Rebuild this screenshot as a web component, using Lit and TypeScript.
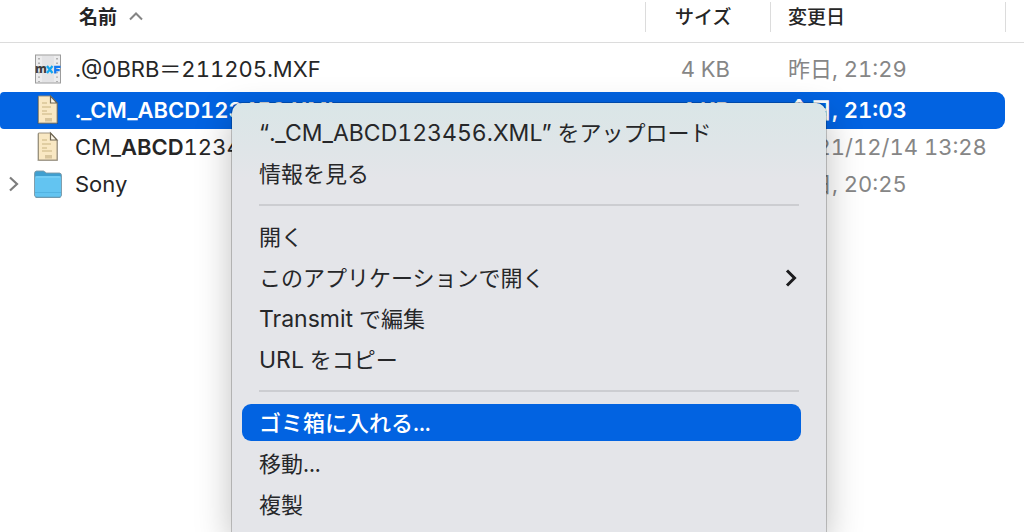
import { LitElement, html, css, svg, nothing, TemplateResult } from "lit";
import { customElement, property, state } from "lit/decorators.js";
import { classMap } from "lit/directives/class-map.js";

type Kind = "mxf" | "doc" | "folder";

interface Entry {
  kind: Kind;
  name: TemplateResult;
  size: string;
  date: string;
}

interface Item {
  id: string;
  label: TemplateResult;
  submenu?: boolean;
}

const entries: Entry[] = [
  { kind: "mxf", name: html`.@0BRB＝211205.MXF`, size: "4 KB", date: "昨日, 21:29" },
  { kind: "doc", name: html`._CM_ABCD123456.XML`, size: "4 KB", date: "今日, 21:03" },
  { kind: "doc", name: html`CM_<b>ABCD</b>123456.XML`, size: "4 KB", date: "2021/12/14 13:28" },
  { kind: "folder", name: html`Sony`, size: "--", date: "今日, 20:25" },
];

const menuGroups: Item[][] = [
  [
    { id: "upload", label: html`<span class="latin">“._CM_ABCD123456.XML”</span> をアップロード` },
    { id: "info", label: html`情報を見る` },
  ],
  [
    { id: "open", label: html`開く` },
    { id: "open-with", label: html`このアプリケーションで開く`, submenu: true },
    { id: "edit", label: html`<span class="latin">Transmit</span> で編集` },
    { id: "copy-url", label: html`<span class="latin">URL</span> をコピー` },
  ],
  [
    { id: "trash", label: html`ゴミ箱に入れる...` },
    { id: "move", label: html`移動...` },
    { id: "duplicate", label: html`複製` },
  ],
];

@customElement("file-icon")
class FileIcon extends LitElement {
  @property() kind: Kind = "doc";

  static styles = css`
    :host { display: flex; }
    .badge { font: 800 12px "Noto Sans", sans-serif; }
  `;

  private mxf() {
    return svg`
      <rect x="2.5" y="2" width="25" height="28" fill="#ececed" stroke="#9c9c9c"/>
      <path d="M6 5v24M24 5v24" stroke="#999" stroke-width="1.4" stroke-dasharray="1.4 3.2"/>
      <rect x="9" y="3" width="12" height="26" fill="#e3e3e5"/>
      <text class="badge" x="2" y="20" fill="#3c3c3c">m</text>
      <path d="M14 13l5.500 7M19.500 13l-5.500 7" stroke="#12a6ee" stroke-width="2.200"/>
      <path d="M22.200 20.500v-6.600h5.300M22.200 17.200h4.500" stroke="#1279f2" stroke-width="2.200"/>`;
  }

  private doc() {
    return svg`
      <path d="M4.500 2.500h13.500l7 7.500v20h-20.500z" fill="#4f4630" opacity=".45"/>
      <path d="M5.500 2h12l6.500 7v20h-18.500z" fill="#f9e8c3" stroke="#948b76" stroke-width=".9"/>
      <path d="M17.500 2v7H24z" fill="#fff8e8" stroke="#6e6552" stroke-width="1.200"/>
      <path d="M9 9h5M9 13h9M9 17h5M9 20h10" stroke="#d9c598" stroke-width="1.300"/>
      <path d="M12 24h7v3.500h-7z" fill="#d8c59c"/>`;
  }

  private folder() {
    return svg`
      <path d="M1.500 6q0-3 2-3h7l3 2h13q2 0 2 3v19q0 2-2 2h-23q-2 0-2-2z" fill="#3f9fd0" stroke="#7e98a5" stroke-width=".9"/>
      <path d="M2 10q0-2 2-2h22q2 0 2 2v17q0 2-2 2h-22q-2 0-2-2z" fill="#63c4f1"/>
      <path d="M2.500 9h25" stroke="#84d5f8"/>
      <path d="M2 24.500h26" stroke="#52b3e2"/>
      <path d="M2.500 29.300h25" stroke="#5a8ba5"/>`;
  }

  render() {
    const art = this.kind === "mxf" ? this.mxf() : this.kind === "doc" ? this.doc() : this.folder();
    return html`<svg width="30" height="32" viewBox="0 0 30 32" fill="none" aria-hidden="true">${art}</svg>`;
  }
}

@customElement("context-menu")
class ContextMenu extends LitElement {
  @state() private active = "trash";

  static styles = css`
    :host {
      display: block;
      box-sizing: border-box;
      padding: 11px 25px 0 10px;
      border-radius: 10px 10px 0 0;
      background: linear-gradient(#dae6e7, #dfe5e8 44px, #e4e5e9 76px);
      box-shadow: 0 0 0 1px rgba(0, 0, 0, 0.2), 0 12px 36px rgba(0, 0, 0, 0.26);
    }
    .group {
      display: flex;
      flex-direction: column;
      gap: 4px;
    }
    .rule {
      height: 2px;
      margin: 12px 2px 12px 17px;
      border: 0;
      background: #cccdd1;
    }
    .item {
      display: flex;
      align-items: center;
      justify-content: space-between;
      height: 37px;
      padding: 0 2px 0 17px;
      border: 0;
      border-radius: 9px;
      background: none;
      color: #262729;
      font: inherit;
      font-variant-numeric: tabular-nums;
      text-align: left;
      white-space: nowrap;
    }
    .latin { font-size: 23px; }
    .active {
      background: #0263e1;
      color: #fff;
      font-weight: 500;
    }
  `;

  render() {
    return html`${menuGroups.map(
      (group, i) => html`
        ${i ? html`<hr class="rule" />` : nothing}
        <div class="group" role="group">
          ${group.map(
            (item) => html`<button
              class=${classMap({ item: true, active: item.id === this.active })}
              role="menuitem"
              @mouseenter=${() => (this.active = item.id)}
            >
              <span>${item.label}</span>
              ${item.submenu
                ? html`<svg width="16" height="20" viewBox="0 0 16 20" fill="none" aria-hidden="true">
                    <path d="M4 2.500l7.500 7.500-7.500 7.500" stroke="#1c1c1e" stroke-width="3" />
                  </svg>`
                : nothing}
            </button>`
          )}
        </div>
      `
    )}`;
  }
}

@customElement("app-root")
class AppRoot extends LitElement {
  @state() private selected = 1;

  static styles = css`
    :host {
      display: block;
      position: relative;
      height: 100vh;
      overflow: hidden;
      background: #fff;
      color: #262626;
      font: 22px/30px Inter, "Noto Sans CJK JP", sans-serif;
      font-variant-numeric: tabular-nums;
    }
    .list {
      width: 100%;
      table-layout: fixed;
      border-collapse: separate;
      border-spacing: 0;
    }
    .col-size { width: 125px; }
    .col-date { width: 235px; }
    .col-end { width: 19px; }
    th {
      height: 42px;
      padding: 0;
      border-bottom: 1px solid #dcdcdc;
      font-size: 19px;
      font-weight: 500;
      text-align: left;
    }
    .label {
      display: flex;
      align-items: center;
      box-sizing: border-box;
      height: 30px;
      margin-bottom: 8px;
      padding: 2px 0 0 17px;
      border-left: 1px solid #dcdcdc;
    }
    .sorted {
      gap: 12px;
      padding-left: 79px;
      border-left: 0;
      font-weight: 700;
    }
    .size-label { padding-left: 29px; }
    td {
      height: 35px;
      padding: 0 0 2px;
      color: #868686;
      white-space: nowrap;
    }
    .first td {
      height: 46px;
      padding-top: 3px;
      padding-bottom: 0;
    }
    .name {
      display: flex;
      align-items: center;
      padding-left: 7px;
      color: #262626;
    }
    .name b { font-weight: 600; }
    .toggle {
      display: flex;
      width: 26px;
      padding: 0;
      border: 0;
      background: none;
    }
    .text { padding-left: 12px; }
    td.size {
      padding-right: 40px;
      text-align: right;
    }
    td.date { padding-left: 18px; }
    .selected td {
      background: #0263e1;
      color: #fff;
      font-weight: 600;
    }
    .selected .name { color: #fff; }
    .selected td:first-child { border-radius: 4px 0 0 4px; }
    .selected .date { border-radius: 0 9px 9px 0; }
    .selected .tail { background: none; }
    .menu {
      position: absolute;
      top: 103px;
      bottom: 0;
      left: 232px;
      width: 594px;
    }
  `;

  render() {
    return html`
      <table class="list">
        <colgroup>
          <col />
          <col class="col-size" />
          <col class="col-date" />
          <col class="col-end" />
        </colgroup>
        <thead>
          <tr>
            <th>
              <div class="label sorted">
                名前
                <svg width="14" height="14" viewBox="0 0 14 14" fill="none" aria-hidden="true">
                  <path d="M1 8.500l6-6 6 6" stroke="#858585" stroke-width="2" />
                </svg>
              </div>
            </th>
            <th><div class="label size-label">サイズ</div></th>
            <th><div class="label">変更日</div></th>
            <th><div class="label"></div></th>
          </tr>
        </thead>
        <tbody>
          ${entries.map(
            (e, i) => html`<tr
              class=${classMap({ first: i === 0, selected: i === this.selected })}
              @click=${() => (this.selected = i)}
            >
              <td>
                <div class="name">
                  <button class="toggle" aria-label="展開" ?disabled=${e.kind !== "folder"}>
                    ${e.kind === "folder"
                      ? html`<svg width="14" height="16" viewBox="0 0 14 16" fill="none" aria-hidden="true">
                          <path d="M3 1.500l7 6.500-7 6.500" stroke="#7d7d7d" stroke-width="2.200" />
                        </svg>`
                      : nothing}
                  </button>
                  <file-icon .kind=${e.kind}></file-icon>
                  <span class="text">${e.name}</span>
                </div>
              </td>
              <td class="size">${e.size}</td>
              <td class="date">${e.date}</td>
              <td class="tail"></td>
            </tr>`
          )}
        </tbody>
      </table>
      <context-menu class="menu" role="menu"></context-menu>
    `;
  }
}
